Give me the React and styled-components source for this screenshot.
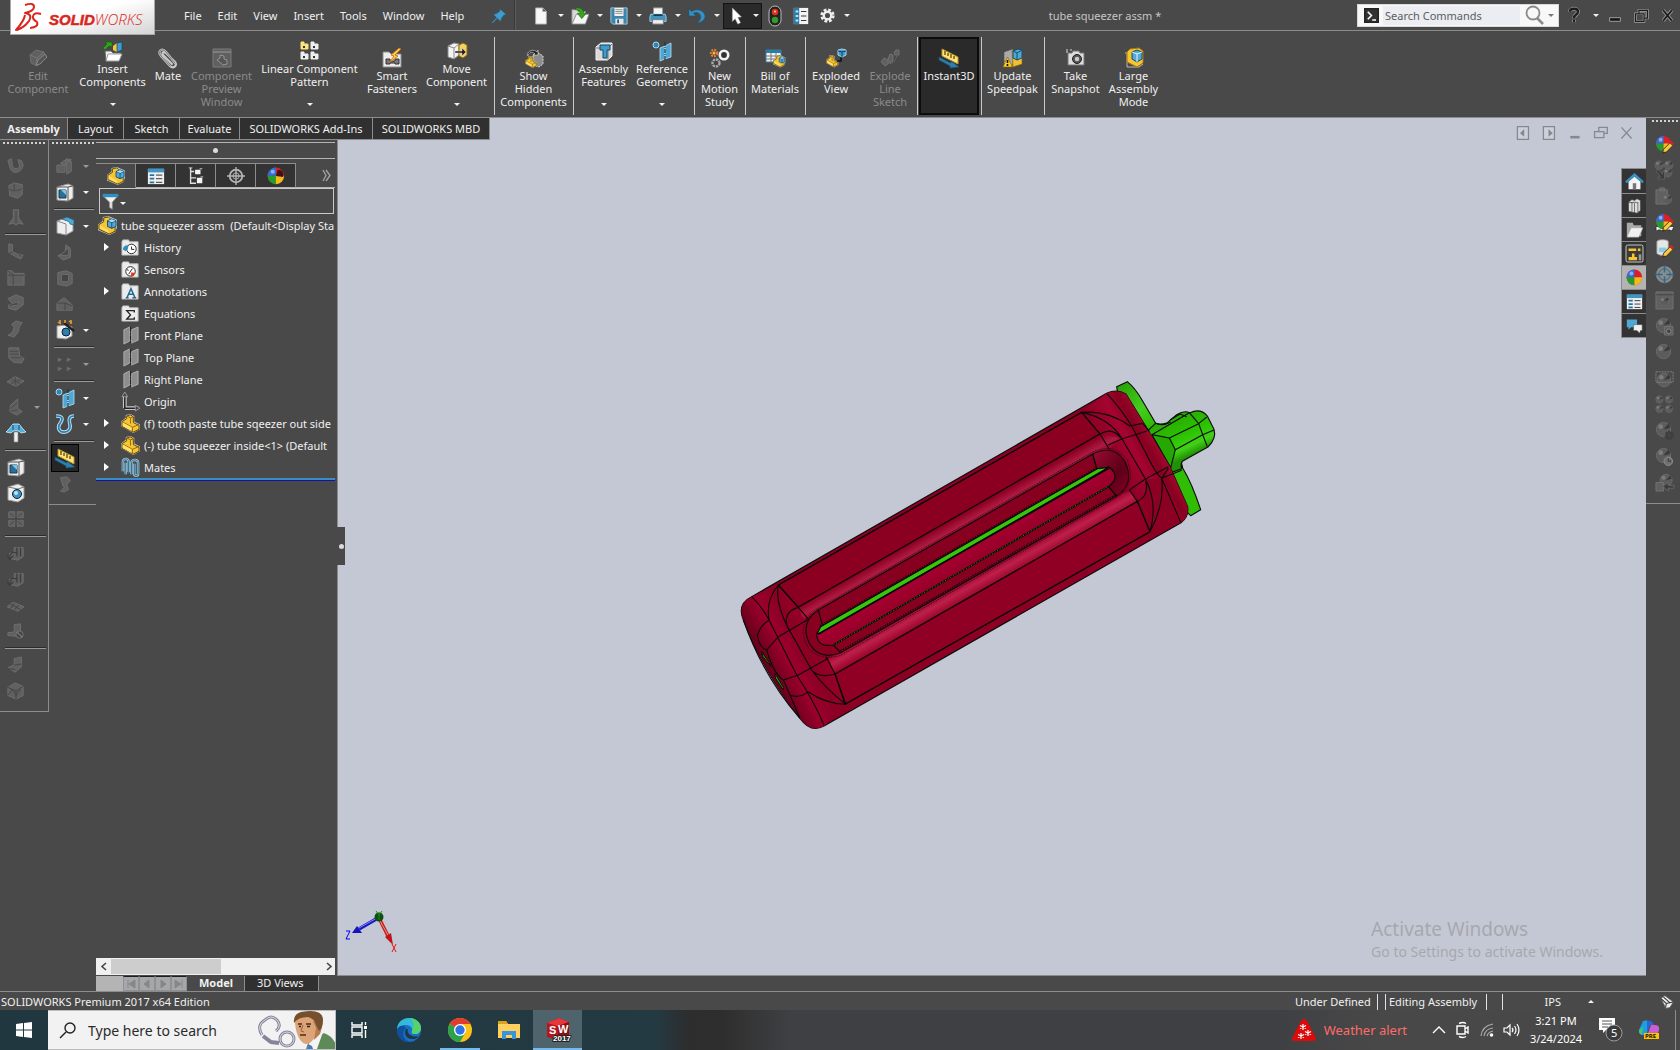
import React from 'react';
import styled, { createGlobalStyle, css } from 'styled-components';

const c = {
  base: '#494949',
  dark: '#303030',
  line: '#8c8c8c',
  light: '#d0d0d0',
  text: '#f0f0f0',
  dim: '#8b8b8b',
  canvas: '#c4c8d4',
};

const Global = createGlobalStyle`
  * { box-sizing: border-box; }
  html, body { margin: 0; background: ${c.base}; }
  body, button, input { font-family: "Noto Sans", "Open Sans", sans-serif; font-size: 11px; }
  button { margin: 0; padding: 0; border: 0; background: none; color: inherit; }
  ul { list-style: none; margin: 0; padding: 0; }
  svg { display: block; flex: none; overflow: visible; }
`;

/* ---------- icon drawings, all on a 20 x 20 grid ---------- */

const part = (
  <>
    <path d="M0 8l5-4V1l5-1 4 2v6l6 3v5l-7 4L0 13z" fill="#c9c9c9" />
    <path d="M1 8l5-3V2l4-1 3 2v6l6 3v4l-6 3L1 13z" fill="#f7c531" stroke="#5f4500" strokeWidth="1" />
    <path d="M1 8l11 6v5M12 14l7-3M6 2l4 2v6M10 4l3-1" fill="none" stroke="#8f6a05" strokeWidth="1" />
    <path d="M2 9l9 5v4l-9-5z" fill="#ffdf70" />
  </>
);
const assembly = (
  <>
    <path d="M0 9l5-4V1l6-1 9 4v8l-2 5-6 3L0 15z" fill="#c9c9c9" />
    <path d="M1 9l5-3V2l5-1 2 2v6l5 3v4l-6 3L1 14z" fill="#f7c531" stroke="#5f4500" />
    <path d="M2 10l9 5v3l-9-5z" fill="#ffdd66" />
    <path d="M10 5l4.500-2L19 5v6l-4.500 2L10 11z" fill="#55a9d6" stroke="#174d6d" />
    <path d="M10 5l4.500 2L19 5M14.500 7v6" fill="none" stroke="#174d6d" />
    <path d="M10.600 5l4-1.500 4 1.500-4 1.600z" fill="#a9dcf4" />
  </>
);
const folder = (
  <path d="M1 18V4l1-2h6l1 2h9v14z" fill="#ececec" stroke="#bdbdbd" />
);
const ballSegments = (
  <>
    <circle cx="9" cy="9" r="8" fill="#d8202a" />
    <path d="M9 9V1a8 8 0 0 0-8 8z" fill="#2d6fe0" />
    <path d="M9 9H1a8 8 0 0 0 8 8z" fill="#1f9e2c" />
    <path d="M9 9v8a8 8 0 0 0 8-8z" fill="#f2b91e" />
    <circle cx="6" cy="5" r="2" fill="#fff" opacity=".45" />
  </>
);
const pencil = (
  <path d="M8 19l1-4 7-7 3 3-7 7z M8 19l2-1M16 8l3 3" fill="#f6ca3e" stroke="#402c1c" strokeWidth="1" />
);
const darkBall = (
  <>
    <circle cx="9" cy="9" r="7.500" fill="#5c5c5c" stroke="#6c6c6c" />
    <path d="M9 9l5-6a7.500 7.500 0 0 1 2 4z" fill="#393939" />
    <circle cx="6" cy="6" r="2.500" fill="#7c7c7c" />
  </>
);
const refGeometry = (
  <>
    <circle cx="4" cy="4" r="3" fill="#2d87b5" stroke="#a9d7ee" />
    <path d="M8 7l5-2v13l-5 2zM13 5l6-3v14l-6 2z" fill="#4fa8d4" stroke="#b9e0f2" strokeWidth=".8" />
    <path d="M13 1v19" stroke="#16384b" strokeDasharray="4 1 1 1" strokeWidth="1.200" />
  </>
);
const instant = (
  <>
    <path d="M3 1l16 8v7L3 8z" fill="#ffe27a" stroke="#b99222" />
    <path d="M6 3v4M9 5v3M12 6v4M15 8v3" stroke="#4b3a00" strokeWidth="1.200" />
    <path d="M0 9l12 6v-2l8 6-9 1v-2L0 12z" fill="#2f7fae" stroke="#185071" strokeWidth=".7" />
  </>
);
const holeCube = (
  <>
    <path d="M2 5l11-3 5 2v12l-5 3-11-1z" fill="#ededed" stroke="#9a9a9a" />
    <path d="M13 5v14M2 5h11l5-1" fill="none" stroke="#555" />
    <path d="M4 8h7v8H4z" fill="#2c6f96" stroke="#153b52" />
    <path d="M6 8h5v5z" fill="#7cc5e6" />
  </>
);
const greyShape = (d) => (
  <path d={d} fill="#606060" stroke="#717171" strokeWidth="1" strokeLinejoin="round" />
);

const art = {
  editComp: <>{greyShape('M2 7l6-5 8 2 1 6-8 8-6-3z')}<path d="M2 7l7 3v8M9 10l7-6" fill="none" stroke="#777" /><path d="M8 17l2-5 7-6 2 3-7 7z" fill="#555" stroke="#888" /></>,
  insertComp: <><path d="M2 10h6l2 2h8l-3 8H3z" fill="#f0f0f0" stroke="#666" /><path d="M5 13h14l-3 7H3z" fill="#fff" stroke="#999" /><path d="M9 6V1H2l2 2-4 4 2 2 4-4z" fill="#2fa31c" stroke="#125c08" strokeWidth=".6" /><path d="M10 5l4-3v9l-4-2z" fill="#f7c531" /><path d="M14 2l5-1v8l-5 2z" fill="#3f9ccd" stroke="#134765" strokeWidth=".7" /></>,
  mate: <g fill="none" strokeLinecap="round"><path d="M17 15L8 4C4-1-1 3 3 8l9 10c3 3 8 0 5-4L8 5C5 3 3 5 6 8l8 8" stroke="#c9c9c9" strokeWidth="2.200" /><path d="M17 15L8 4C4-1-1 3 3 8l9 10" stroke="#454545" strokeWidth=".6" /></g>,
  preview: <><path d="M1 1h18v18H1z" fill="#5f5f5f" stroke="#7c7c7c" /><path d="M1 4h18" stroke="#888" strokeWidth="1.500" /><path d="M5 12l3-2V7l4 1v3l3 1v4l-4 1z" fill="#565656" stroke="#959595" /></>,
  linear: <>{[[1, 1, '#ffe27a'], [11, 1, '#eee'], [1, 11, '#eee'], [11, 11, '#eee']].map(([x, y, f]) => <path key={x + '-' + y} d={`M${x} ${y}h3v2h4v5h-7z`} fill={f} stroke={f} />)}<path d="M3 5h2v2H3zM13 5h2v2h-2zM3 15h2v2H3zM13 15h2v2h-2z" fill="#333" /></>,
  smart: <><path d="M1 4h6l2 2h10v13H1z" fill="#ededed" stroke="#8d8d8d" /><path d="M4 16v-5h4v2h5v-2h4v5h-4v-1H8v1z" fill="#777" stroke="#333" /><path d="M17 0L9 7l3 1-5 7 9-7-3-1 6-6z" fill="#ffce3b" stroke="#c7631b" strokeWidth=".8" /></>,
  move: <><path d="M1 5l6-3 5 1v11l-5 4-6-2z" fill="#f3f3f3" stroke="#8b8b8b" /><path d="M1 5l6 2 5-4M7 7v11" fill="none" stroke="#8b8b8b" /><path d="M12 4l4-2 4 2v10l-4 3-4-2z" fill="#f4d160" stroke="#8c6c10" /><path d="M8 10h7V7l4 4-4 4v-3H8z" fill="#222" stroke="#ddd" strokeWidth=".5" /></>,
  showHidden: <><path d="M9 7l4-3 6 4v8l-4 3-6-2z" fill="#8d8d8d" stroke="#d9d9d9" strokeDasharray="2 1" /><g transform="translate(1 8) scale(.6)">{part}</g><path d="M3 7c1-5 7-6 10-3l1-2v5H9l2-1C8 3 5 4 4 8z" fill="#222" stroke="#ddd" strokeWidth=".6" /></>,
  asmFeatures: <><path d="M2 6l5-4h11v13l-4 4H2z" fill="#d9d9d9" stroke="#f5f5f5" /><path d="M2 7h12v12M14 7l4-4" fill="none" stroke="#777" /><path d="M6 4h10v5h-3v8H9V9H6z" fill="#3f9ccd" stroke="#154a67" /></>,
  refGeometry,
  motion: <><circle cx="4" cy="5" r="3" fill="none" stroke="#e57f2e" strokeWidth="2.400" strokeDasharray="1.800 1" /><circle cx="4" cy="5" r="1.500" fill="#f7b04b" /><circle cx="14" cy="7" r="4.200" fill="#333" stroke="#f2f2f2" strokeWidth="2.600" /><circle cx="6" cy="15" r="3.500" fill="#444" stroke="#a8a8a8" strokeWidth="2.400" strokeDasharray="2.400 .8" /></>,
  bom: <><path d="M1 2h15v12H1z" fill="#f2f2f2" stroke="#3b82a8" /><path d="M1 2h15v3H1z" fill="#2d7ba6" /><path d="M1 8h15M1 11h15M6 5v9M11 5v9" stroke="#777" /><g transform="translate(8 7) scale(.62)">{assembly}</g></>,
  explode: <><g transform="translate(0 7) scale(.62)">{part}</g><path d="M11 13h4V9" fill="none" stroke="#111" strokeWidth="1.500" /><path d="M12 2l4-1 4 1v5l-4 2-4-2z" fill="#3f9ccd" stroke="#a7d8ef" /><path d="M12 3l4 1 4-1M16 4v5" stroke="#0f4059" fill="none" /></>,
  explodeLine: <>{greyShape('M1 14l3-4 4 2v4l-3 2z')}{greyShape('M8 11l2-5 3 1v6l-3 2z')}{greyShape('M14 4l2-2h3v5h-4z')}<path d="M8 15c5 2 8-3 9-8" fill="none" stroke="#777" strokeDasharray="1 1" /></>,
  instant,
  speedpak: <><path d="M1 4l9-3v17l-9-1z" fill="#aaa" stroke="#555" strokeDasharray="2 1" /><path d="M9 3l10-1v14l-9 3z" fill="#f0bf32" stroke="#8b6400" strokeWidth=".6" /><path d="M10 3l5-2 4 1v8l-5 2-4-2z" fill="#4fa8d4" stroke="#174d6d" /><path d="M10 3l4 2 5-3M14 5v7" fill="none" stroke="#174d6d" /><path d="M4.500 9l5 10H0z" fill="#ffcf1f" stroke="#8b6400" strokeWidth=".7" /><path d="M4.500 12v3M4.500 16v2" stroke="#111" strokeWidth="1.600" /></>,
  camera: <><path d="M2 5h4l1-2h6l1 2h4v12H2z" fill="#ddd" stroke="#777" /><circle cx="11" cy="11" r="4.500" fill="#555" stroke="#222" /><circle cx="11" cy="11" r="2.200" fill="#ccc" /><path d="M1 1v4M4 2h2" stroke="#ddd" /></>,
  large: <><path d="M1 5h2v14h12l4-3" fill="none" stroke="#bbb" /><path d="M3 4l3-3 9-1 4 3v12l-6 4-10-5z" fill="#f7c531" stroke="#a57a08" /><path d="M8 4l5-2 5 2v7l-5 3-5-3z" fill="#55a9d6" stroke="#174d6d" /><path d="M8 4l5 2 5-2M13 6v8" fill="none" stroke="#dff3fb" /></>,

  newDoc: <path d="M4 1h8l4 4v14H4zM12 1v4h4" fill="#f7f7f7" stroke="#aaa" />,
  open: <><path d="M1 3h6l1 2h8v13H1z" fill="#d9d9d9" stroke="#888" /><path d="M6 8h14l-4 11H1z" fill="#f6f6f6" stroke="#888" /><path d="M5 1c6-1 9 2 9 6h3l-5 6-5-6h3c0-2-1-4-5-4z" fill="#37a51c" stroke="#145c08" strokeWidth=".6" /></>,
  save: <><path d="M1 1h18v18H3l-2-2z" fill="#3c86ad" stroke="#a8cfe3" /><path d="M5 1h10v9H5z" fill="#f2f2f2" /><path d="M6 3h8M6 5h8M6 7h8" stroke="#888" /><path d="M6 13h9v6H6z" fill="#e4e4e4" /><path d="M8 14h2v4H8z" fill="#245d7c" /></>,
  print: <><path d="M5 1h10v8H5z" fill="#f5f5f5" stroke="#999" /><path d="M2 8h16l1 3v5H1v-5z" fill="#3f93be" stroke="#a8cfe3" /><path d="M4 14h12v5H4z" fill="#eee" stroke="#777" /><path d="M5 9h10" stroke="#133b50" strokeWidth="2" /></>,
  undo: <path d="M1 2v8h8L6 7c4-2 8 0 8 4 0 3-2 5-4 7 6-1 9-4 9-8C18 3 9 1 4 5z" fill="#3a8fc0" stroke="#17516f" strokeWidth=".7" />,
  cursor: <path d="M6 1l10 10-4 .5 3 6-3 1.500-3-6-3 3z" fill="#fff" stroke="#aaa" strokeWidth=".6" />,
  traffic: <><rect x="4" y="0" width="12" height="20" rx="6" fill="#222" stroke="#bbb" /><circle cx="10" cy="6" r="3.200" fill="#e3301c" /><circle cx="10" cy="14" r="3.200" fill="#329b2b" /><circle cx="10" cy="5.500" r="1" fill="#ffc9bd" /></>,
  list: <><path d="M2 1h16v18H2z" fill="#f3f3f3" /><path d="M2 1h6v18H2z" fill="#2f7ba3" /><path d="M4 4h3v2H4zM4 9h3v2H4zM4 14h3v2H4z" fill="#b9e2f5" /><path d="M10 5h6M10 10h6M10 15h6" stroke="#222" /></>,
  gear: <><circle cx="10" cy="10" r="7.500" fill="none" stroke="#ececec" strokeWidth="4" strokeDasharray="3.600 2.290" /><circle cx="10" cy="10" r="5" fill="none" stroke="#ececec" strokeWidth="3.200" /></>,
  pin: <path d="M11 1l8 7-3 1-3 4-1 4-4-4-6 6-1-1 6-6-4-4 4-1 4-3z" fill="#3f9ccd" stroke="#1d5776" strokeWidth=".6" />,
  prompt: <><path d="M1 1h18v18H1z" fill="#333" stroke="#222" strokeWidth="2" /><path d="M5 5l5 5-5 5M11 16h5" fill="none" stroke="#fff" strokeWidth="2" /></>,
  magnifier: <><circle cx="9" cy="8" r="6.500" fill="none" stroke="#8b8b8b" strokeWidth="1.800" /><path d="M13 13l6 6" stroke="#8b8b8b" strokeWidth="2.600" /></>,
  help: <g fill="none"><path d="M5 6c0-5 10-5 10 0 0 4-5 3-5 8M10 16v3" stroke="#9c9c9c" strokeWidth="5" /><path d="M5 6c0-5 10-5 10 0 0 4-5 3-5 8M10 16v3" stroke="#1d1d1d" strokeWidth="3" /></g>,
  winMin: <path d="M4 13h12v4H4z" fill="#151515" stroke="#aaa" />,
  winRestore: <g fill="none"><path d="M7 8V4h10v9h-4M3 8h10v9H3z" stroke="#a5a5a5" strokeWidth="3" /><path d="M7 8V4h10v9h-4M3 8h10v9H3z" stroke="#1b1b1b" strokeWidth="1.400" /></g>,
  winClose: <g fill="none"><path d="M5 4l10 12M15 4L5 16" stroke="#a0a0a0" strokeWidth="4" /><path d="M5 4l10 12M15 4L5 16" stroke="#1b1b1b" strokeWidth="2" /></g>,

  docPrev: <><path d="M4 3h13v15H4z" fill="#ccd0da" stroke="#85888f" strokeWidth="1.500" /><path d="M13 3v15M12 6l-5 5 5 4z" fill="#85888f" /></>,
  docNext: <><path d="M4 3h13v15H4z" fill="#ccd0da" stroke="#85888f" strokeWidth="1.500" /><path d="M10 6l5 5-5 4z" fill="#85888f" /></>,
  docMin: <path d="M5 14h11v3H5z" fill="#85888f" />,
  docRestore: <path d="M8 9V4h10v7h-4M3 9h11v7H3z" fill="none" stroke="#85888f" strokeWidth="1.500" />,
  docClose: <path d="M4 4l12 13M16 4L4 17" stroke="#85888f" strokeWidth="1.500" />,

  assembly,
  part,
  propList: <><path d="M1 2h18v17H1z" fill="#f0f0f0" /><path d="M1 2h18v4H1z" fill="#3b97c7" /><path d="M3 8h5v2H3zM3 12h5v2H3zM3 16h5v2H3z" fill="#2673a0" /><path d="M10 9h7M10 13h7M10 17h7" stroke="#222" /></>,
  config: <><path d="M4 1v17h6M4 5h4M4 12h6" fill="none" stroke="#ddd" strokeWidth="1.500" /><path d="M9 3h6v5H9zM11 12h6v6h-6z" fill="#f4f4f4" /><path d="M2 1h4M14 2h3M15 11h3" stroke="#ddd" /></>,
  target: <g fill="none" stroke="#b5b5b5"><circle cx="10" cy="10" r="7" strokeWidth="2" /><circle cx="10" cy="10" r="3.500" /><path d="M10 0v20M0 10h20" strokeWidth="1.500" /></g>,
  ball: <g transform="translate(-.5 -.5) scale(1.150)">{ballSegments}</g>,
  ballDark: <><g transform="translate(-.5 -.5) scale(1.150)">{ballSegments}</g><path d="M10 10l2-7c5 0 7 4 6 8z" fill="#3b1515" /></>,
  funnel: <><path d="M1 3h18l-7 8v8l-3-2v-6z" fill="#eee" stroke="#999" /><path d="M1 1h18v4H1z" fill="#2f8fc0" /></>,
  history: <>{folder}<circle cx="11" cy="11.500" r="5" fill="#fff" stroke="#222" /><path d="M11 9v3h3" fill="none" stroke="#222" /><path d="M2 12c0-3 3-5 6-4l-1 4-1-1-1 3z" fill="#2f8fc0" /></>,
  sensors: <>{folder}<circle cx="10" cy="12" r="5" fill="#fff" stroke="#222" /><path d="M8 15l4-6M6 10l2 1" stroke="#222" /><path d="M11 13l4 1-2 3h-3z" fill="#e2371c" /></>,
  equations: <>{folder}<path d="M14 9V7H6l4 4.500L6 16h8v-2" fill="none" stroke="#222" strokeWidth="1.400" /></>,
  annotations: <>{folder}<path d="M5 16.500h3M12 16.500h4M6.500 16L10.500 7l4 9M8 13h5" fill="none" stroke="#226b95" strokeWidth="1.600" /></>,
  plane: <><path d="M3 4l6-3v15l-6 3zM11 4l7-3v14l-7 3z" fill="#8d8d8d" stroke="#bdbdbd" strokeWidth=".8" /><path d="M10 1v18" stroke="#222" strokeDasharray="5 1 2 1" strokeWidth="1.300" /></>,
  origin: <><path d="M4 17V3M4 17h14" stroke="#c7c7c7" strokeWidth="4" /><path d="M4 18V3M3 17h15" stroke="#222" strokeWidth="1.600" /><path d="M4 0l-3 5h6zM20 17l-5-3v6z" fill="#444" stroke="#bbb" strokeWidth=".7" /></>,
  mates: <g fill="none"><path d="M2 14V4c0-4 6-4 6 0v11M5 5v12M11 17V5c0-4 7-4 7 0v12c0 2-4 2-4 0V6" stroke="#9fc7dc" strokeWidth="2.600" /><path d="M2 14V4c0-4 6-4 6 0v11M5 5v12M11 17V5c0-4 7-4 7 0v12c0 2-4 2-4 0V6" stroke="#256a90" /></g>,

  holeCube,
  cutRound: <><path d="M2 5l9-3 7 3v10l-7 4-9-2z" fill="#eee" stroke="#999" /><path d="M2 5l9 3v11" fill="none" stroke="#888" /><path d="M7 3l5-2 7 3v5l-4-1c0-3-4-3-8-5z" fill="#4fa8d4" stroke="#225a79" strokeWidth=".7" /></>,
  wizardHole: <><path d="M2 6l9-1 6 2v9l-6 3-9-1z" fill="#eee" stroke="#999" /><circle cx="11" cy="12" r="4" fill="#2f7fae" stroke="#123" /><path d="M9 3l10 8" stroke="#222" strokeWidth="2.500" /><path d="M3 2l3 2M5 0v4M14 1l3 2M16 0v4M10 0v3" stroke="#f0a030" strokeWidth="1.500" /></>,
  spline: <><path d="M1 2c10 0 5 6 3 9-3 10 13 9 11 0-1-4-2-9 4-9" fill="none" stroke="#b7dcf0" strokeWidth="3.600" /><path d="M1 2c10 0 5 6 3 9-3 10 13 9 11 0-1-4-2-9 4-9" fill="none" stroke="#2a7dab" strokeWidth="1.600" /></>,
  dome: <><path d="M0 9l3-3 4-5h6l4 5 3 3-5 1c-2-3-8-3-10 0z" fill="#56b0dc" stroke="#cfeaf7" strokeWidth=".8" /><path d="M7 2v5M13 2v5" stroke="#174d6d" /><path d="M8 9h4v10H8z" fill="#f0f0f0" stroke="#888" strokeWidth=".7" /></>,
  roundHole: <><path d="M2 4l10-3 6 3v11l-6 4-10-2z" fill="#eee" stroke="#999" /><path d="M2 4l10 2 6-2" fill="none" stroke="#777" /><circle cx="11" cy="11" r="4.500" fill="#3c94c2" stroke="#123" /><circle cx="10" cy="10" r="2" fill="#bfe5f5" /></>,
  gU: greyShape('M1 5l4-2 1 8c1 4 7 4 8 0l-2-7 4 1 2 5c-1 8-10 11-14 5z'),
  gCube: <>{greyShape('M2 4l6-3 9 2v11l-5 4-9-3z')}<path d="M2 8c6 3 10 2 15-1M8 2v8" stroke="#484848" fill="none" /></>,
  gLoft: <>{greyShape('M7 2h6v9l5 7-5-1-3 2-3-2-5 1 5-7z')}<path d="M10 3v14" stroke="#454545" /></>,
  gBend: <>{greyShape('M2 2l4 1v8l12 4-3 4L2 12z')}<path d="M6 11l-4 2M7 8l9 8" stroke="#454545" /></>,
  gBox: <>{greyShape('M1 3h4l3 3h11v13H1z')}<path d="M1 8h18M7 8v11M1 3l6 5" stroke="#484848" fill="none" /></>,
  gSweep: <>{greyShape('M1 5l9-4 8 3v8l-8 6-8-2v-4l9 1 3-4-8 2z')}<path d="M3 13l8-3" stroke="#464646" /></>,
  gS: greyShape('M5 5l5-4 7 2-3 4-2 7-4 5-7-2 5-3 2-6z'),
  gStack: <>{greyShape('M2 2h11l1 9 5 3-3 5-9-1-5-5z')}<path d="M3 6h10M3 9h10M5 13h11" stroke="#484848" /></>,
  gMesh: <>{greyShape('M0 11l9-6 10 5-9 6z')}<path d="M5 8l10 5M4 13l12-5M9 5l1 11" stroke="#484848" /></>,
  gFan: <>{greyShape('M4 8l8-7v11l5 3-6 4-8-4z')}<path d="M3 12l9-7M3 15l9-2" stroke="#484848" /></>,
  gGrid: <>{greyShape('M2 2h7v7H2zM11 2h7v7h-7zM2 11h7v7H2zM11 11h7v7h-7z')}<path d="M3 3l5 5M12 8l5-5M3 17l5-5M12 12l5 5" stroke="#484848" /><path d="M10 1v18M1 10h18" stroke="#484848" strokeWidth="1.500" /></>,
  gArrowBox: <>{greyShape('M8 4h10v10l-6 4-9-2v-6h5z')}<path d="M11 10c-6-2-8 1-8 6M0 13l3 4 4-4M11 4v10M15 4v10" stroke="#3d3d3d" fill="none" strokeWidth="1.400" /></>,
  gTiles: <>{greyShape('M0 12l7-5 12 5-7 5z')}<path d="M4 9l11 6M8 8l-4 6M13 10l-5 6" stroke="#444" /></>,
  gNo: <>{greyShape('M1 12l7-1V3l7-1v9l-3 5-11-1z')}<circle cx="14" cy="14" r="4" fill="#444" stroke="#777" /><path d="M11 11l6 6" stroke="#777" strokeWidth="1.500" /></>,
  gStep: <>{greyShape('M1 13l7-3V3l8-2v11l-7 6z')}<path d="M8 10l8-1M1 14l8 1" stroke="#444" /></>,
  gWire: <>{greyShape('M1 6l8-5 9 4v10l-8 4-9-4z')}<path d="M1 6l9 4 8-5M10 10v9M6 8l4 7 5-7M1 15l5-7" stroke="#444" fill="none" /></>,
  gExtrude: <>{greyShape('M1 9h9v8H1zM11 3l6 2v11l-5 3zM5 7l7-5 5 1-7 6z')}</>,
  gRib: <>{greyShape('M2 14l8-3 1-9 5 4v10l-8 3z')}<path d="M5 14l9-9v9z" fill="#4b4b4b" stroke="#6f6f6f" /></>,
  gShell: <>{greyShape('M2 4l9-2 7 3v11l-6 3-10-2z')}<path d="M6 6h8v8H6z" fill="#454545" stroke="#6f6f6f" /></>,
  gDraft: <>{greyShape('M1 9l8-6 9 8v6H1z')}<path d="M1 9h9l8 3M10 9v8" stroke="#444" fill="none" /></>,
  gDots: <path d="M2 3l5 2-5 3zM12 3l5 2-5 3zM2 13l5 2-5 3zM12 13l5 2-5 3z" fill="#6c6c6c" />,
  gTwist: greyShape('M5 3l7-1 4 4-4 5 2 5-5 3-4-1 4-4-2-4z'),
  gDown: <><g transform="translate(-1 -1) scale(.6)">{darkBall}</g><g transform="translate(9 -1) scale(.6)">{darkBall}</g><g transform="translate(8 7) scale(.6)">{darkBall}</g><path d="M1 10l2-1 5 5v-3h2v8H3v-2h3z" fill="#3a3a3a" stroke="#6c6c6c" strokeWidth=".7" /></>,
  gPaste: <>{greyShape('M1 3h12v15H1zM5 1h5v3H5z')}<g transform="translate(7 7) scale(.65)">{darkBall}</g></>,
  gRender: <>{greyShape('M1 1h18v18H1z')}<path d="M1 4h18" stroke="#444" /><g transform="translate(4 5) scale(.65)">{darkBall}</g></>,
  gPreview: <>{darkBall}{greyShape('M10 10h9v9h-9z')}<circle cx="14.500" cy="15" r="2.500" fill="#444" stroke="#888" /></>,
  gBall: darkBall,
  gRegion: <><g transform="translate(1 3) scale(.95)">{darkBall}</g><path d="M1 3h18v11H1z" fill="none" stroke="#858585" strokeDasharray="2 1" /></>,
  gFour: <>{[[0, 0], [10, 0], [0, 10], [10, 10]].map(([x, y]) => <g key={x + '.' + y} transform={`translate(${x} ${y}) scale(.52)`}>{darkBall}</g>)}</>,
  gOptions: <>{darkBall}<circle cx="15" cy="15" r="3.500" fill="#444" stroke="#3c3c3c" strokeWidth="2.500" strokeDasharray="2 1" /></>,
  gClock: <>{darkBall}<circle cx="14" cy="15" r="4.500" fill="#707070" stroke="#8d8d8d" /><path d="M14 12v3h3" fill="none" stroke="#333" /></>,
  gRecall: <><g transform="translate(4 0) scale(.85)">{darkBall}</g>{greyShape('M1 10h8v9H1z')}<path d="M8 14l6-4v3h6v3h-6v3z" fill="#3d3d3d" stroke="#777" strokeWidth=".7" /></>,
  ballPencil: <>{ballSegments}{pencil}<path d="M15 8l2-2 3 3-2 2z" fill="#d8202a" /></>,
  scene: <><path d="M1 14h18v4H1z" fill="#eee" stroke="#222" strokeDasharray="3 2" />{ballSegments}{pencil}<path d="M15 8l2-2 3 3-2 2z" fill="#d8202a" /></>,
  decal: <><path d="M2 3c0-3 12-3 12 0v12c-2 3-10 3-12 0z" fill="#e7e7e7" stroke="#999" /><path d="M4 9h8v5H4z" fill="#8fc9e6" />{pencil}<path d="M15 8l2-2 3 3-2 2z" fill="#d8202a" /></>,
  targetBlue: <><circle cx="10" cy="10" r="9" fill="#878c90" /><g fill="none" stroke="#316885"><circle cx="10" cy="10" r="6" /><path d="M10 0v8M10 12v8M0 10h8M12 10h8" strokeWidth="1.500" /></g></>,

  home: <><path d="M3 10v9h14v-9l-7-6z" fill="#f4f4f4" /><path d="M0 11L10 2l10 9" fill="none" stroke="#3a93c1" strokeWidth="3" /><path d="M8 12h4v7H8z" fill="#777" /></>,
  books: <path d="M3 6l4-3 3 1 3-2 4 2v12l-4 3-10-2zM7 7v11M10 7v12M14 6v12M3 6l4 1 3-1 4 1" fill="#ddd" stroke="#444" strokeWidth=".8" />,
  openFolder: <><path d="M1 2h7l1 3h9v13H1z" fill="#a9a9a9" /><path d="M6 8h14l-5 11H1z" fill="#f1f1f1" stroke="#999" strokeWidth=".6" /></>,
  palette: <><rect x="0" y="0" width="20" height="20" rx="2" fill="#3a3a3a" stroke="#ddd" /><path d="M3 4h9v3H3zM14 4h3v3h-3zM7 10h3v4h3v4H3v-4h4z" fill="#f7c531" /><path d="M15 11h3v7h-3z" fill="#999" /></>,
  chat: <><path d="M1 3h12v9H6l-3 3v-3H1z" fill="#4fa8d4" /><path d="M9 9h10v7h-2l-1 3-3-3H9z" fill="#f1f1f1" stroke="#555" strokeWidth=".6" /></>,
  tools: <><path d="M1 5l6-4 12 9-5 8-6 1-2-5z" fill="#ededed" stroke="#666" /><path d="M1 5l8 7 10-2M9 12l-1 6M5 3l9 8" fill="none" stroke="#333" strokeWidth="1.500" /></>,
};

function Icon({ name, size = 18 }) {
  return (
    <svg width={size} height={size} viewBox="0 0 20 20" aria-hidden="true">
      {art[name]}
    </svg>
  );
}

/* ---------- shared pieces ---------- */

const Caret = styled.span`
  width: 0;
  height: 0;
  flex: none;
  border: 3px solid transparent;
  border-bottom-width: 0;
  border-top-color: ${(p) => p.$color || '#f2f2f2'};
`;

const Page = styled.div`
  min-height: 100vh;
  display: flex;
  flex-direction: column;
  background: ${c.base};
  color: ${c.text};
  line-height: 16px;
`;

/* ---------- title bar ---------- */

const TitleBar = styled.header`
  display: flex;
  align-items: center;
  height: 31px;
  border-bottom: 1px solid ${c.line};
`;

const Logo = styled.div`
  align-self: flex-start;
  display: flex;
  align-items: center;
  gap: 5px;
  flex: none;
  width: 145px;
  height: 35px;
  margin-left: 10px;
  padding-left: 4px;
  border: 1px solid #a9a9a9;
  border-top: 0;
  background: linear-gradient(165deg, #fff 45%, #d4d4d4);
  color: #d9261c;
  font: italic 300 15px/20px "Open Sans", sans-serif;
  z-index: 2;
`;
const LogoText = styled.span`
  padding-top: 4px;
  b { font: italic 700 15px/20px "Liberation Sans", sans-serif; -webkit-text-stroke: 0.5px #d9261c; }
`;

const MenuBar = styled.nav`
  display: flex;
  align-items: center;
  flex: none;
  width: 360px;
  height: 30px;
  padding: 1px 7px 0 21px;
  border-right: 1px solid #3a3a3a;
  box-shadow: 1px 0 #5c5c5c;
`;
const MenuItem = styled.button`
  padding: 0 8px;
  font-size: 11px;
`;
const PinButton = styled.button`
  margin-left: auto;
`;

const QuickBar = styled.div`
  display: flex;
  flex: none;
  margin-left: 13px;
  padding-top: 1px;
`;
const ToolPair = styled.div`
  display: flex;
  height: 26px;
  ${(p) => p.$on && css`background: #2a2a2a; outline: 1px solid #141414; outline-offset: -1px;`}
`;
const ToolButton = styled.button`
  display: flex;
  align-items: center;
  justify-content: center;
  flex: none;
  width: ${(p) => p.$w || 26}px;
  height: 26px;
`;

const DocTitle = styled.div`
  flex: 1;
  padding-top: 1px;
  text-align: center;
  color: #c6c6c6;
`;

const CommandSearch = styled.label`
  display: flex;
  align-items: center;
  flex: none;
  width: 202px;
  height: 23px;
  padding: 1px 4px 1px 6px;
  background: #f8f8f8;
  border: 1px solid #d9d9d9;
  gap: 4px;
`;
const CommandInput = styled.input`
  flex: 1;
  min-width: 0;
  height: 19px;
  border: 0;
  padding: 0 2px;
  background: #ebedf2;
  color: #555;
  &::placeholder { color: #5c5c5c; opacity: 1; }
`;
const WindowButtons = styled.div`
  display: flex;
  flex: none;
`;

/* ---------- ribbon ---------- */

const Ribbon = styled.div`
  display: flex;
  height: 87px;
  padding: 6px 0 2px;
  border-bottom: 1px solid ${c.line};
`;
const RibbonItem = styled.button`
  display: flex;
  flex-direction: column;
  align-items: center;
  justify-content: flex-start;
  flex: none;
  width: ${(p) => p.$w}px;
  padding-top: ${(p) => (p.$drop ? 4 : 11)}px;
  line-height: 13px;
  color: ${(p) => (p.$off ? c.dim : c.text)};
  ${(p) => p.$on && css`background: #2a2a2a; outline: 2px solid #0c0c0c; outline-offset: -2px;`}
`;
const RibbonText = styled.span`
  margin-top: 1px;
  white-space: pre;
`;
const RibbonCaret = styled(Caret)`
  margin-top: 15px;
`;
const RibbonRule = styled.div`
  flex: none;
  width: 1px;
  margin: 0 1px 0 2px;
  background: #c9c9c9;
`;

const ribbon = [
  ['editComp', 'Edit\nComponent', 76, { off: true }],
  ['insertComp', 'Insert\nComponents', 73, { drop: true }],
  ['mate', 'Mate', 38, {}],
  ['preview', 'Component\nPreview\nWindow', 69, { off: true }],
  ['linear', 'Linear Component\nPattern', 107, { drop: true }],
  ['smart', 'Smart\nFasteners', 58, {}],
  ['move', 'Move\nComponent', 71, { drop: true }],
  null,
  ['showHidden', 'Show\nHidden\nComponents', 75, {}],
  null,
  ['asmFeatures', 'Assembly\nFeatures', 57, { drop: true }],
  ['refGeometry', 'Reference\nGeometry', 60, { drop: true }],
  null,
  ['motion', 'New\nMotion\nStudy', 47, {}],
  null,
  ['bom', 'Bill of\nMaterials', 56, {}],
  null,
  ['explode', 'Exploded\nView', 58, {}],
  ['explodeLine', 'Explode\nLine\nSketch', 50, { off: true }],
  null,
  ['instant', 'Instant3D', 60, { on: true }],
  null,
  ['speedpak', 'Update\nSpeedpak', 59, {}],
  null,
  ['camera', 'Take\nSnapshot', 59, {}],
  ['large', 'Large\nAssembly\nMode', 57, {}],
];

/* ---------- workspace ---------- */

const Workspace = styled.div`
  display: flex;
  flex: 1;
`;
const MainArea = styled.div`
  position: relative;
  display: flex;
  flex-direction: column;
  flex: 1;
  min-width: 0;
  background: ${c.canvas};
`;
const CommandTabs = styled.div`
  display: flex;
  height: 22px;
  flex: none;
`;
const CommandTab = styled.button`
  flex: none;
  width: ${(p) => p.$w}px;
  border: 1px solid ${c.line};
  border-width: 0 1px 1px 0;
  background: ${(p) => (p.$on ? c.base : c.dark)};
  font-weight: ${(p) => (p.$on ? 700 : 400)};
`;
const commandTabs = [
  ['Assembly', 68], ['Layout', 56], ['Sketch', 56], ['Evaluate', 60],
  ['SOLIDWORKS Add-Ins', 133], ['SOLIDWORKS MBD', 117],
];

const Lower = styled.div`
  display: flex;
  flex: 1;
`;
const SideArea = styled.div`
  display: flex;
  flex: none;
  align-items: flex-start;
  background: ${c.base};
`;
const Strip = styled.div`
  display: flex;
  flex-direction: column;
  flex: none;
  width: ${(p) => p.$w}px;
  padding-bottom: ${(p) => p.$end}px;
  border-bottom: 1px solid ${c.line};
  ${(p) => p.$rule && css`border-right: 1px solid ${c.line};`}
`;
const Grip = styled.div`
  height: 2px;
  margin: ${(p) => p.$m};
  background: repeating-linear-gradient(90deg, #d2d2d2 0 2px, transparent 2px 4px);
`;
const StripRow = styled.div`
  display: flex;
  align-items: center;
  height: 26px;
  padding-left: ${(p) => p.$pad || 3}px;
`;
const StripButton = styled(ToolButton)`
  ${(p) => p.$on && css`background: #262626; outline: 1px solid #000;`}
`;
const StripCaret = styled(Caret)`
  margin-left: 5px;
`;
const StripRule = styled.div`
  height: 2px;
  margin: 3px 2px 3px 5px;
  background: linear-gradient(#2c2c2c 50%, #9a9a9a 50%);
`;

const stripA = ['gU', 'gCube', 'gLoft', '-', 'gBend', 'gBox', 'gSweep', 'gS', 'gStack', 'gMesh', 'gFan>', 'dome', '-', 'holeCube', 'roundHole', 'gGrid', '-', 'gArrowBox', 'gArrowBox', 'gTiles', 'gNo', '-', 'gStep', 'gWire'];
const stripB = ['gExtrude>', 'holeCube>', '-', 'cutRound>', 'gRib', 'gShell', 'gDraft', 'wizardHole>', '-', 'gDots>', '-', 'refGeometry>', 'spline>', '-', 'instant!', 'gTwist'];
const stripR = ['ballPencil', 'gDown', 'gPaste', 'scene', 'decal', 'targetBlue', 'gRender', 'gPreview', 'gBall', 'gRegion', 'gFour', 'gOptions', 'gClock', 'gRecall'];

function StripItems({ items }) {
  return items.map((it, i) => {
    if (it === '-') return <StripRule key={i} />;
    const name = it.replace(/[>!]/, '');
    const off = name[0] === 'g';
    return (
      <StripRow key={i}>
        <StripButton aria-label={name} $on={it.endsWith('!')}>
          <Icon name={name} size={off ? 18 : 20} />
        </StripButton>
        {it.endsWith('>') && <StripCaret $color={off ? '#9a9a9a' : undefined} />}
      </StripRow>
    );
  });
}

/* ---------- feature manager ---------- */

const Panel = styled.section`
  display: flex;
  flex-direction: column;
  align-self: stretch;
  flex: none;
  width: 239px;
  margin-right: 2px;
`;
const PanelGrip = styled.div`
  display: flex;
  align-items: center;
  justify-content: center;
  height: 17px;
  margin: 2px 0 5px;
  border: 1px solid #b5b5b5;
  border-width: 1px 0;
`;
const Dot = styled.span`
  width: 5px;
  height: 5px;
  border-radius: 50%;
  background: #dcdcdc;
`;
const PanelTabs = styled.div`
  display: flex;
  align-items: center;
  height: 24px;
  border-bottom: 1px solid #b5b5b5;
  flex: none;
`;
const PanelTab = styled.button`
  display: flex;
  align-items: center;
  justify-content: center;
  width: 40px;
  height: 25px;
  border: 1px solid ${c.line};
  border-left: 0;
  background: ${(p) => (p.$on ? c.base : '#333')};
  border-bottom-color: ${(p) => (p.$on ? c.base : '#b5b5b5')};
`;
const PanelMore = styled.button`
  margin-left: auto;
  padding-right: 4px;
`;
const Filter = styled.label`
  display: flex;
  align-items: center;
  height: 26px;
  margin: 0 1px 0 3px;
  padding-left: 2px;
  border: 1px solid #c9c9c9;
  flex: none;
`;
const FilterCaret = styled(Caret)`
  margin: 5px 0 0 1px;
`;
const FilterInput = styled.input`
  flex: 1;
  min-width: 0;
  border: 0;
  outline: 0;
  background: none;
  color: ${c.text};
`;
const TreeRow = styled.li`
  display: flex;
  align-items: center;
  height: 22px;
  padding-left: ${(p) => (p.$root ? 2 : 8)}px;
`;
const Twisty = styled.span`
  width: 17px;
  flex: none;
  &::before {
    content: "";
    display: ${(p) => (p.$show ? 'block' : 'none')};
    width: 0;
    border: 4px solid transparent;
    border-left: 5px solid #fff;
    border-right: 0;
  }
`;
const TreeLabel = styled.button`
  display: flex;
  align-items: center;
  gap: 4px;
  flex: none;
  white-space: pre;
`;
const Rollback = styled.div`
  height: 3px;
  background: linear-gradient(#3a8cc4 66%, #1414a4 66%);
`;
const HScroll = styled.div`
  display: flex;
  align-items: center;
  justify-content: space-between;
  height: 17px;
  margin-top: auto;
  background: #f0f0f0;
  flex: none;
`;
const ScrollButton = styled.button`
  display: flex;
  align-items: center;
  justify-content: center;
  width: ${(p) => p.$w}px;
  height: 17px;
`;
const ScrollTrack = styled.div`
  flex: 1;
  height: 15px;
  &::before {
    content: "";
    display: block;
    width: 52%;
    height: 100%;
    background: #cdcdcd;
  }
`;
const SheetTabs = styled.div`
  display: flex;
  height: 16px;
  flex: none;
  padding-top: 1px;
`;
const SheetPad = styled.div`
  width: 27px;
  background: #b4b4b4;
`;
const SheetNav = styled.button`
  display: flex;
  align-items: center;
  justify-content: center;
  width: 16px;
  background: #a5a7a9;
  border: 1px solid #8f9193;
  border-top: 1px solid #1d1d1d;
`;
const SheetTab = styled.button`
  width: ${(p) => p.$w}px;
  line-height: 14px;
  padding: 0 0 2px 12px;
  text-align: left;
  font-weight: ${(p) => (p.$on ? 700 : 400)};
  background: ${(p) => (p.$on ? c.base : c.dark)};
  border-right: 1px solid ${c.line};
`;

const tree = [
  ['history', 'History', true],
  ['sensors', 'Sensors', false],
  ['annotations', 'Annotations', true],
  ['equations', 'Equations', false],
  ['plane', 'Front Plane', false],
  ['plane', 'Top Plane', false],
  ['plane', 'Right Plane', false],
  ['origin', 'Origin', false],
  ['part', '(f) tooth paste tube sqeezer out side', true],
  ['part', '(-) tube squeezer inside<1> (Default', true],
  ['mates', 'Mates', true],
];

/* ---------- graphics area ---------- */

const Viewport = styled.main`
  position: relative;
  flex: 1;
  min-width: 0;
  margin-bottom: 15px;
  border: 1px solid ${c.line};
  border-width: 0 0 1px 1px;
  background: ${c.canvas};
`;
const ViewColumn = styled.div`
  display: flex;
  flex: 1;
  min-width: 0;
  background: ${c.base};
`;
const Model = styled.svg`
  position: absolute;
  left: 382px;
  top: 230px;
`;
const Triad = styled.svg`
  position: absolute;
  left: 5px;
  bottom: 19px;
`;
const PaneHandle = styled.button`
  position: absolute;
  left: -1px;
  top: 387px;
  display: flex;
  align-items: center;
  justify-content: center;
  width: 8px;
  height: 38px;
  background: ${c.base};
`;
const Watermark = styled.div`
  position: absolute;
  right: 43px;
  bottom: 12px;
  color: #a6a8ad;
  font-size: 14px;
  line-height: 22px;
`;
const WatermarkTitle = styled.div`
  font-size: 19px;
  line-height: 24px;
`;
const DocButtons = styled.div`
  position: absolute;
  right: 7px;
  top: 1px;
  display: flex;
`;
const TaskPane = styled.div`
  position: absolute;
  right: 0;
  top: 50px;
  width: 25px;
  border: 1px solid ${c.line};
  border-width: 1px 0 1px 1px;
`;
const TaskTab = styled.button`
  display: flex;
  align-items: center;
  justify-content: center;
  width: 24px;
  height: 24px;
  background: ${(p) => (p.$on ? '#b3b3b3' : '#333')};
  & + & { border-top: 1px solid ${c.line}; }
`;

/* ---------- status bar and taskbar ---------- */

const StatusBar = styled.footer`
  display: flex;
  align-items: center;
  height: 19px;
  padding: 1px 6px 0 1px;
  border-top: 1px solid ${c.line};
`;
const StatusRight = styled.div`
  display: flex;
  align-items: center;
  margin-left: auto;
`;
const StatusCell = styled.span`
  flex: none;
  width: ${(p) => p.$w}px;
  line-height: 16px;
  padding: 0 4px 0 3px;
  text-align: ${(p) => p.$align || 'left'};
  ${(p) => p.$rule && css`border-right: 1px solid #e2e2e2;`}
  height: 16px;
`;
const UpCaret = styled.span`
  border: 3px solid transparent;
  border-top: 0;
  border-bottom-color: #f2f2f2;
  margin: 0 66px 0 23px;
`;

const Taskbar = styled.footer`
  display: flex;
  height: 40px;
  background: linear-gradient(90deg, #213740 0, #243a43 39%, #2d2d2d 41%, #2e2e2e 43%, #3f4043 47%, #3f4044 76%, #484848 82%);
`;
const AppButton = styled.button`
  display: flex;
  align-items: center;
  justify-content: center;
  width: ${(p) => p.$w || 49}px;
  height: 40px;
  ${(p) => p.$run && css`background: linear-gradient(#76b9ed, #76b9ed) bottom / 40px 2px no-repeat;`}
  ${(p) => p.$on && css`background: #4e636b; box-shadow: inset 0 -2px #76b9ed;`}
`;
const WinSearch = styled.label`
  display: flex;
  align-items: center;
  width: 288px;
  height: 40px;
  padding-left: 12px;
  gap: 12px;
  background: #f2f2f2;
  border: 1px solid #bdbdbd;
  border-left: 0;
  overflow: hidden;
`;
const WinInput = styled.input`
  flex: 1;
  min-width: 0;
  height: 30px;
  padding: 0;
  border: 0;
  background: none;
  font-size: 14px;
  &::placeholder { color: #2b2b2b; opacity: 1; }
`;
const Tray = styled.div`
  display: flex;
  align-items: center;
  margin-left: auto;
  height: 40px;
`;
const Weather = styled.button`
  display: flex;
  align-items: center;
  gap: 8px;
  color: #ff6b68;
  font-size: 13px;
  margin-right: 20px;
`;
const TrayButton = styled.button`
  display: flex;
  align-items: center;
  justify-content: center;
  width: 24px;
  height: 40px;
`;
const Clock = styled.time`
  width: 66px;
  text-align: center;
  line-height: 18px;
  color: #fff;
`;
const Alerts = styled(TrayButton)`
  width: 36px;
  margin-left: 4px;
`;
const Copilot = styled(TrayButton)`
  width: 46px;
  padding-right: 6px;
`;
const ShowDesktop = styled.button`
  width: 5px;
  height: 40px;
  border-left: 1px solid #8c8c8c;
`;

/* ---------- drawings ---------- */

function SqueezerModel() {
  return (
    <Model width="510" height="370" viewBox="0 0 1530 1110" role="img" aria-label="tube squeezer assembly">
      <defs>
        <linearGradient id="ridgeA" gradientUnits="userSpaceOnUse" x1="240" y1="708" x2="266" y2="754">
          <stop offset="0" stopColor="#8c0022" /><stop offset=".5" stopColor="#ae1a41" /><stop offset="1" stopColor="#900026" />
        </linearGradient>
        <linearGradient id="ridgeB" gradientUnits="userSpaceOnUse" x1="316" y1="862" x2="345" y2="914">
          <stop offset="0" stopColor="#9b002a" /><stop offset=".45" stopColor="#bd204a" /><stop offset="1" stopColor="#940026" />
        </linearGradient>
        <linearGradient id="capLeft" gradientUnits="userSpaceOnUse" x1="70" y1="780" x2="240" y2="690">
          <stop offset="0" stopColor="#5e0018" /><stop offset=".4" stopColor="#9c002b" /><stop offset=".7" stopColor="#8a0023" /><stop offset="1" stopColor="#9c002a" />
        </linearGradient>
        <linearGradient id="capRight" gradientUnits="userSpaceOnUse" x1="1170" y1="260" x2="1330" y2="170">
          <stop offset="0" stopColor="#8d0024" /><stop offset=".4" stopColor="#a50430" /><stop offset=".6" stopColor="#87001f" /><stop offset=".85" stopColor="#ac0a36" /><stop offset="1" stopColor="#7a001e" />
        </linearGradient>
        <linearGradient id="slotFloor" gradientUnits="userSpaceOnUse" x1="700" y1="555" x2="722" y2="593">
          <stop offset="0" stopColor="#a80030" /><stop offset="1" stopColor="#98002a" />
        </linearGradient>
        <linearGradient id="slotEnd" x1="0" y1="0" x2="1" y2="1">
          <stop offset="0" stopColor="#9c0a30" /><stop offset=".6" stopColor="#5c0018" /><stop offset="1" stopColor="#8a0022" />
        </linearGradient>
        <linearGradient id="knob" gradientUnits="userSpaceOnUse" x1="1370" y1="130" x2="1425" y2="250">
          <stop offset="0" stopColor="#2aa804" /><stop offset=".5" stopColor="#2bc200" /><stop offset=".8" stopColor="#40d018" /><stop offset="1" stopColor="#238f06" />
        </linearGradient>
        <linearGradient id="flange" gradientUnits="userSpaceOnUse" x1="1200" y1="40" x2="1300" y2="170">
          <stop offset="0" stopColor="#28a004" /><stop offset=".6" stopColor="#45cf1e" /><stop offset="1" stopColor="#2db800" />
        </linearGradient>
      </defs>
      <g stroke="#0b0b0b" strokeWidth="3.400" strokeLinejoin="round" fill="none">
        <path d="M1190 50l32-15q24 20 44 55l41 70-20 27-50-82-45-42z" fill="url(#flange)" />
        <path d="M1350 290l35-8 3 12q28 46 54 125l-30 18-10-10-50-120z" fill="#2fbd06" />
        <path d="M1352 306l36-17" />
        <path d="M1280 185l27-25q15 6 35-2l28-24q22-14 40-6 32-14 52 10l20 40q8 26-17 52l-78 44q-6 10-2 22l-33 12z" fill="url(#knob)" />
        <path d="M1296 194l52 10 18 35-14 54z" fill="#25a802" />
        <path d="M1296 194l112-66 28 33-88 43M1366 239l82-45-12-33M1448 194l34-14M1436 161l24-20M1448 194l14 36M1307 160q20 10 45-4M1350 150l30-18 20 8" />
        <path d="M95 680L1160 70q30-14 58 2l72 118 60 100 53 120q4 32-20 48L312 1068q-40 22-72-23-110-140-170-295-20-48 25-70z" fill="#8c0023" />
        <path d="M95 680L175 645l65 65 85 155 53 138-66 65q-40 22-72-23-110-140-170-295-20-48 25-70z" fill="url(#capLeft)" stroke="none" />
        <path d="M1085 127l75-57q30-14 58 2l72 118 60 100 53 120q4 32-20 48l-93 27-35-93-88-165z" fill="url(#capRight)" stroke="none" />
        <path d="M1290 485l-38-91q30-16 24-66l49-3 55 130 3 3z" fill="#8c0023" stroke="none" />
        <path d="M175 645L1085 127l55 65L235 712z" fill="#8b0021" />
        <path d="M345 912L1252 394l38 91L375 1003z" fill="#900024" />
        <path d="M235 712L1140 192l60 12-45 50L300 726l-50 20z" fill="url(#ridgeA)" stroke="none" />
        <path d="M325 865L365 846 1190 378l40-14 22 30L345 912z" fill="url(#ridgeB)" stroke="none" />
        <path d="M295 720L1118 252q62-30 96 22 32 66-24 104L362 848q-62 24-92-24-34-66 25-104z" fill="#87001f" />
        <path d="M290 718L1118 246q62-28 102 22 32 72-28 114L362 856q-68 20-100-28-34-70 28-110z" strokeDasharray="3 3" strokeWidth="2.400" />
        <path d="M1118 252q62-30 96 22 32 66-24 104l-25-28q34-30 8-58l-43 4z" fill="url(#slotEnd)" strokeWidth="2" />
        <path d="M290 790L1165 290q40 30 0 60L340 825q-50 8-50-35z" fill="url(#slotFloor)" />
        <path d="M292 790l10-20L1132 296l34-4L300 790z" fill="#37c60a" />
        <path d="M300 768L1132 293" strokeDasharray="4 4" strokeWidth="6" />
        <path d="M294 793L1168 294" strokeWidth="5" />
        <path d="M340 825L1165 350" strokeWidth="5" />
        <path d="M340 825L1165 350" stroke="#24a000" strokeDasharray="3 6" strokeWidth="3" />
        <path d="M362 843L1188 374" strokeDasharray="4 4" strokeWidth="5" />
        <path d="M295 720l12 45M340 825l22 23M1118 252l12 43M1165 350l25 28" />

        <path d="M175 645L1085 127M375 1003L1290 485M235 712L1140 192M345 912L1252 394" />
        <path d="M1160 70q40 42 75 98l42 80q30 62 48 77l58 133M1085 127q80-6 145 41M1085 127q85 18 120 78l70 120M1085 127l55 65 28 46M1140 192q38-22 62 12M1165 225l40-18 76-24M1230 168l38-8 20 24" />
        <path d="M1228 360l47-32 70-38M1228 360l24 34 38 91M1275 325q40 75 15 160M1325 325q10 75-35 160M1252 394q36-16 25-60M1345 295l-20 30 60-24" />
        <path d="M175 645l60 67 28 33M175 645q-10 55 30 130l70 125M175 645q-38 45-28 105l83 165q50 75 82 150M95 680q30 28 52 70M203 775q-16-50 32-63M112 795q10-30 35-45M140 840l35-40 90-52M190 930l45-15 90-50M275 900q22 26 70 12M318 860l27 52 33 91M275 900q40 55 103 103M265 965q50 36 113 38M210 975q28 12 55-10M70 750q60 170 170 295M112 795q6 40 28 45 20 70 50 90l20 45 30 70" />
        <path d="M125 845l22 32 5 12-24-30zM165 910l25 42v8l-24-36z" fill="#21a000" strokeWidth="3" />
      </g>
    </Model>
  );
}

function AxisTriad() {
  return (
    <Triad width="60" height="46" viewBox="0 0 60 46" role="img" aria-label="orientation triad">
      <path d="M35 8L16 19" stroke="#1818c8" strokeWidth="3.500" />
      <path d="M34 8L16 18" stroke="#8484f0" strokeWidth="1" />
      <path d="M9 23l5-7 5 7z" fill="#1414b8" />
      <path d="M36 8l10 20" stroke="#c81c1c" strokeWidth="3.500" />
      <path d="M36 9l10 18" stroke="#f09090" strokeWidth="1" />
      <path d="M50 35l-8-8 6-4z" fill="#c01414" />
      <circle cx="36" cy="7" r="4.500" fill="#124d12" />
      <path d="M33 1l3 4 3-4M36 5v5" stroke="#0b9a0b" fill="none" />
      <path d="M3 21h4l-4 8h4" stroke="#0000f0" fill="none" />
      <path d="M49 34l4 8M53 34l-4 8" stroke="#f01010" fill="none" />
    </Triad>
  );
}

function DetectiveArt() {
  return (
    <svg width="78" height="38" viewBox="0 0 78 38" aria-hidden="true">
      <g fill="none" stroke="#85859a" strokeWidth="3">
        <path d="M5 24Q-1 14 8 9q6-6 12 0 5 6-1 11" />
        <circle cx="30" cy="28" r="7" />
        <path d="M6 25l8 6 8 1" strokeWidth="4" />
      </g>
      <g fill="none" stroke="#dcdce6"><path d="M5 24Q-1 14 8 9q6-6 12 0 5 6-1 11" /><circle cx="30" cy="28" r="7" /></g>
      <path d="M49 38q2-9 10-11l8-5q11 4 13 16z" fill="#5d8a58" />
      <path d="M50 38l3-8 13-9-6 17z" fill="#f4f4f4" />
      <path d="M51 33l4 2 1 3h-6z" fill="#4a78b8" />
      <path d="M38 12q0-8 11-9 14 0 15 9l-2 10-8 9q-5 4-9 0-6-6-7-19z" fill="#dca477" />
      <path d="M56 10l3 7-2 12 6-6q3-8 2-14z" fill="#b67c50" />
      <path d="M37 12q-1-9 7-11 22-4 22 8 0 8-4 11l-3-6q-1-6-8-8-10 0-14 6z" fill="#76502c" />
      <path d="M41 13h4M49 13h5M43 24h6" stroke="#4b2c18" strokeWidth="1.300" />
      <path d="M46 14l-2 6 3 1" fill="none" stroke="#9a6038" />
      <path d="M42 15.500h2M50 15.500h3" stroke="#222" strokeWidth="1.500" />
    </svg>
  );
}

const EdgeLogo = () => (
  <svg width="24" height="24" viewBox="0 0 24 24" aria-hidden="true">
    <circle cx="12" cy="12" r="12" fill="#1670c8" />
    <path d="M0 12C0 4 6 0 12 0c7 0 12 5 12 10 0 4-3 6-6 6-3 0-4-1-3-3 1-3-2-6-6-6-4 0-8 2-9 5z" fill="#35b9d8" />
    <path d="M13 0c7 1 11 5 11 10 0 4-3 6-6 6-3 0-4-1-3-3 3-6 2-10-2-13z" fill="#58d36a" />
    <path d="M9 11c-3 5 1 11 8 10 2 0 4-2 5-3-2 1-7 1-10-2-1-1-2-3-1-5z" fill="#213740" />
    <path d="M9 10c-5 4-3 12 4 14C5 25 0 19 0 12c1-4 6-6 9-2z" fill="#0f4f9e" />
  </svg>
);
const ChromeLogo = () => (
  <svg width="24" height="24" viewBox="0 0 24 24" aria-hidden="true">
    <circle cx="12" cy="12" r="12" fill="#fbc116" />
    <path d="M12 12L1.600 6A12 12 0 0 1 22.400 6z" fill="#e33b2e" />
    <path d="M1.600 6A12 12 0 0 0 12 24l5.200-9z" fill="#2da24c" />
    <path d="M12 6h10.400L17 15z" fill="#fbc116" />
    <circle cx="12" cy="12" r="6" fill="#fff" />
    <circle cx="12" cy="12" r="4.700" fill="#2f74e6" />
  </svg>
);
const FolderLogo = () => (
  <svg width="22" height="20" viewBox="0 0 22 20" aria-hidden="true">
    <path d="M0 1h8l2 3h12v14H0z" fill="#fdd060" />
    <path d="M0 1h8l2 3H0z" fill="#dda016" />
    <path d="M4 11h14v8h-4v-4H8v4H4z" fill="#3a94dc" />
  </svg>
);
const SwLabel = styled.text`
  font-family: "Liberation Sans", sans-serif;
  font-weight: 700;
`;
const SolidLogo = () => (
  <svg width="24" height="24" viewBox="0 0 24 24" aria-hidden="true">
    <path d="M1 5L13 0l10 4v14l-11 4L1 19z" fill="#b5161c" />
    <path d="M1 5L13 0l10 4-11 4z" fill="#e5373a" />
    <path d="M12 8l11-4v14l-11 4z" fill="#8d0e13" />
    <SwLabel x="3" y="16" fontSize="11" fill="#fff">S</SwLabel>
    <SwLabel x="12" y="15" fontSize="11" fill="#fff">W</SwLabel>
    <SwLabel x="7" y="23" fontSize="8" fill="#fff" stroke="#222" strokeWidth="2" paintOrder="stroke">2017</SwLabel>
  </svg>
);

const line = { fill: 'none', stroke: '#fff', strokeWidth: 1.4 };

export default function App() {
  return (
    <Page>
      <Global />
      <TitleBar>
        <Logo>
          <svg width="29" height="28" viewBox="0 0 29 28" aria-hidden="true">
            <path d="M10 2q9-3 9 2 0 4-9 6 8 1 4 8-4 6-13 9 8-9 9-15M2 27q8-3 11-8M26 11q-7-2-8 2-1 3 4 6 2 5-7 6" fill="none" stroke="#d9261c" strokeWidth="2" strokeLinejoin="round" />
          </svg>
          <LogoText><b>SOLID</b>WORKS</LogoText>
        </Logo>
        <MenuBar>
          {['File', 'Edit', 'View', 'Insert', 'Tools', 'Window', 'Help'].map((m) => <MenuItem key={m}>{m}</MenuItem>)}
          <PinButton aria-label="Pin menu"><Icon name="pin" size={16} /></PinButton>
        </MenuBar>
        <QuickBar>
          {['newDoc', 'open', 'save', 'print', 'undo', 'cursor'].map((n) => (
            <ToolPair key={n} $on={n === 'cursor'}>
              <ToolButton aria-label={n}><Icon name={n} /></ToolButton>
              <ToolButton $w={13} aria-label={n + ' options'}><Caret /></ToolButton>
            </ToolPair>
          ))}
          <ToolButton aria-label="Rebuild"><Icon name="traffic" size={20} /></ToolButton>
          <ToolButton aria-label="File properties"><Icon name="list" size={18} /></ToolButton>
          <ToolButton aria-label="Options"><Icon name="gear" size={15} /></ToolButton>
          <ToolButton $w={13} aria-label="More options"><Caret /></ToolButton>
        </QuickBar>
        <DocTitle>tube squeezer assm *</DocTitle>
        <CommandSearch>
          <Icon name="prompt" size={15} />
          <CommandInput placeholder="Search Commands" aria-label="Search Commands" />
          <Icon name="magnifier" size={20} />
          <Caret $color="#777" />
        </CommandSearch>
        <WindowButtons>
          <ToolButton $w={30} aria-label="Help"><Icon name="help" size={16} /></ToolButton>
          <ToolButton $w={13} aria-label="Help options"><Caret /></ToolButton>
          <ToolButton aria-label="Minimize"><Icon name="winMin" size={18} /></ToolButton>
          <ToolButton aria-label="Restore"><Icon name="winRestore" size={17} /></ToolButton>
          <ToolButton aria-label="Close"><Icon name="winClose" size={17} /></ToolButton>
        </WindowButtons>
      </TitleBar>

      <Ribbon>
        {ribbon.map((r, i) => {
          if (!r) return <RibbonRule key={i} />;
          const [icon, label, w, o] = r;
          return (
            <RibbonItem key={i} $w={w} $drop={o.drop} $off={o.off} $on={o.on}>
              <Icon name={icon} size={20} />
              <RibbonText>{label}</RibbonText>
              {o.drop && <RibbonCaret />}
            </RibbonItem>
          );
        })}
      </Ribbon>

      <Workspace>
        <MainArea>
          <CommandTabs>
            {commandTabs.map(([t, w], i) => <CommandTab key={t} $w={w} $on={i === 0}>{t}</CommandTab>)}
          </CommandTabs>
          <Lower>
            <SideArea>
              <Strip $w={49} $end={7} $rule>
                <Grip $m="2px 2px 8px 3px" />
                <StripItems items={stripA} />
              </Strip>
              <Strip $w={47} $end={7}>
                <Grip $m="2px 2px 9px 3px" />
                <StripItems items={stripB} />
              </Strip>
              <Panel>
                <PanelGrip><Dot /></PanelGrip>
                <PanelTabs>
                  {['assembly', 'propList', 'config', 'target', 'ballDark'].map((n, i) => (
                    <PanelTab key={n} $on={i === 0} aria-label={n}><Icon name={n} size={18} /></PanelTab>
                  ))}
                  <PanelMore aria-label="More tabs">
                    <svg width="9" height="13" viewBox="0 0 9 13"><path d="M1 1l3 5.500L1 12M4 1l4 5.500L4 12" fill="none" stroke="#a5a5a5" strokeWidth="1.300" /></svg>
                  </PanelMore>
                </PanelTabs>
                <Filter>
                  <Icon name="funnel" size={17} />
                  <FilterCaret />
                  <FilterInput aria-label="Filter tree" />
                </Filter>
                <ul>
                  <TreeRow $root>
                    <TreeLabel><Icon name="assembly" size={19} />{'tube squeezer assm  (Default<Display Sta'}</TreeLabel>
                  </TreeRow>
                  {tree.map(([icon, label, open]) => (
                    <TreeRow key={label}>
                      <Twisty $show={open} />
                      <TreeLabel><Icon name={icon} size={19} />{label}</TreeLabel>
                    </TreeRow>
                  ))}
                </ul>
                <Rollback />
                <HScroll>
                  <ScrollButton $w={15} aria-label="Scroll left"><svg width="6" height="9" viewBox="0 0 6 9"><path d="M5 1L1 4.500 5 8" fill="none" stroke="#444" strokeWidth="1.600" /></svg></ScrollButton>
                  <ScrollTrack />
                  <ScrollButton $w={12} aria-label="Scroll right"><svg width="6" height="9" viewBox="0 0 6 9"><path d="M1 1l4 3.500L1 8" fill="none" stroke="#444" strokeWidth="1.600" /></svg></ScrollButton>
                </HScroll>
                <SheetTabs>
                  <SheetPad />
                  {['M2 1v8M9 1L3 5l6 4z', 'M7 1L2 5l5 4z', 'M3 1l5 4-5 4z', 'M8 1v8M1 1l6 4-6 4z'].map((d) => (
                    <SheetNav key={d} aria-label="Sheet navigation"><svg width="10" height="10" viewBox="0 0 10 10"><path d={d} fill="#85878a" stroke="#85878a" /></svg></SheetNav>
                  ))}
                  <SheetTab $w={58} $on>Model</SheetTab>
                  <SheetTab $w={74}>3D Views</SheetTab>
                </SheetTabs>
              </Panel>
            </SideArea>
            <ViewColumn>
              <Viewport>
                <SqueezerModel />
                <AxisTriad />
                <PaneHandle aria-label="Collapse panel"><Dot /></PaneHandle>
                <Watermark>
                  <WatermarkTitle>Activate Windows</WatermarkTitle>
                  Go to Settings to activate Windows.
                </Watermark>
              </Viewport>
            </ViewColumn>
          </Lower>
          <DocButtons>
            {['docPrev', 'docNext', 'docMin', 'docRestore', 'docClose'].map((n) => (
              <ToolButton key={n} aria-label={n}><Icon name={n} size={17} /></ToolButton>
            ))}
          </DocButtons>
          <TaskPane>
            {['home', 'books', 'openFolder', 'palette', 'ball', 'propList', 'chat'].map((n) => (
              <TaskTab key={n} $on={n === 'ball'} aria-label={n}><Icon name={n} size={17} /></TaskTab>
            ))}
          </TaskPane>
        </MainArea>
        <SideArea>
          <Strip $w={34} $end={8}>
            <Grip $m="2px 0 9px 6px" />
            {stripR.map((n) => (
              <StripRow key={n} $pad={5}><StripButton aria-label={n}><Icon name={n} size={19} /></StripButton></StripRow>
            ))}
          </Strip>
        </SideArea>
      </Workspace>

      <StatusBar>
        <span>SOLIDWORKS Premium 2017 x64 Edition</span>
        <StatusRight>
          <StatusCell $w={86} $rule>Under Defined</StatusCell>
          <StatusCell $w={8} $rule />
          <StatusCell $w={101} $rule>Editing Assembly</StatusCell>
          <StatusCell $w={16} $rule />
          <StatusCell $w={62} $align="right">IPS</StatusCell>
          <UpCaret />
          <Icon name="tools" size={14} />
        </StatusRight>
      </StatusBar>

      <Taskbar>
        <AppButton $w={48} aria-label="Start">
          <svg width="16" height="16" viewBox="0 0 16 16"><path d="M0 2l7-1v6.500H0zM8 1l8-1v7.500H8zM0 8.500h7V15l-7-1zM8 8.500h8V16l-8-1z" fill="#fff" /></svg>
        </AppButton>
        <WinSearch>
          <svg width="16" height="17" viewBox="0 0 16 17"><circle cx="10" cy="6" r="5" fill="none" stroke="#222" strokeWidth="1.400" /><path d="M6 10l-6 6" stroke="#222" strokeWidth="1.400" /></svg>
          <WinInput placeholder="Type here to search" aria-label="Type here to search" />
          <DetectiveArt />
        </WinSearch>
        <AppButton $w={46} aria-label="Task view">
          <svg width="16" height="16" viewBox="0 0 16 16"><path d="M1 0v3h10V0M1 16v-3h10v3M1 5h10v6H1zM14.500 0v3M14.500 8v8" {...line} /><path d="M13 4h3v3h-3z" fill="#fff" /></svg>
        </AppButton>
        <AppButton $w={54} aria-label="Edge"><EdgeLogo /></AppButton>
        <AppButton $w={48} aria-label="Chrome" $run><ChromeLogo /></AppButton>
        <AppButton aria-label="File Explorer"><FolderLogo /></AppButton>
        <AppButton aria-label="SOLIDWORKS 2017" $on><SolidLogo /></AppButton>
        <Tray>
          <Weather>
            <svg width="24" height="22" viewBox="0 0 24 22" aria-hidden="true">
              <path d="M12 0q2 0 3 2l9 17q0 3-3 3H3q-3 0-3-3L9 2q1-2 3-2z" fill="#dc0a0a" />
              <g stroke="#fff" strokeWidth="1.200"><path d="M11 5v6M8 6.500l6 3M14 6.500l-6 3M16 11v6M13 12.500l6 3M19 12.500l-6 3M9 14v6M6 15.500l6 3M12 15.500l-6 3" /></g>
            </svg>
            Weather alert
          </Weather>
          <TrayButton aria-label="Hidden icons"><svg width="12" height="8" viewBox="0 0 12 8"><path d="M0 7l6-6 6 6" {...line} /></svg></TrayButton>
          <TrayButton aria-label="Meet now"><svg width="14" height="16" viewBox="0 0 14 16"><path d="M1 4h8v8H1zM9 7l3-2v6l-3-2M3 1.500q4-2 7 0M3 14.500q4 2 7 0" {...line} /></svg></TrayButton>
          <TrayButton aria-label="Network"><svg width="14" height="14" viewBox="0 0 14 14"><path d="M1 13Q2 3 13 1M4 13q1-7 9-8M7 13q1-4 6-5" fill="none" stroke="#aaa" strokeWidth="1.200" /><circle cx="11.500" cy="12" r="1.800" fill="#fff" /></svg></TrayButton>
          <TrayButton aria-label="Volume"><svg width="17" height="14" viewBox="0 0 17 14"><path d="M1 5h3l3-3v10L4 9H1zM9 5q2 2 0 4M11.500 3q3 4 0 8M14 1q4 6 0 12" {...line} strokeWidth="1.200" /></svg></TrayButton>
          <Clock>3:21 PM<br />3/24/2024</Clock>
          <Alerts aria-label="5 notifications">
            <svg width="24" height="24" viewBox="0 0 24 24">
              <path d="M0 0h16v12H7l-3 3v-3H0z" fill="#fff" /><path d="M3 3h10M3 6h10M3 9h6" stroke="#555" />
              <circle cx="15" cy="15" r="8" fill="#3b3b3b" stroke="#9b9b9b" />
              <text x="12" y="19" fontSize="11" fill="#fff">5</text>
            </svg>
          </Alerts>
          <Copilot aria-label="Copilot preview">
            <svg width="20" height="20" viewBox="0 0 20 20">
              <path d="M4 1q2-1 8 0l-4 12q-1 2-5 2-4-1-3-5z" fill="#1a9fe0" />
              <path d="M8 1h4q2 1 3 4h-4L8 13z" fill="#2b63d8" />
              <path d="M12 5h5q4 1 3 5l-2 6H8z" fill="#c95fd0" />
              <path d="M0 10l4-3-1 8q-3-1-3-5z" fill="#4cc46a" />
              <path d="M5 13h15v6H5z" fill="#ffc400" />
              <text x="6" y="18" fontSize="6" fontWeight="700" fill="#111">PRE</text>
            </svg>
          </Copilot>
          <ShowDesktop aria-label="Show desktop" />
        </Tray>
      </Taskbar>
    </Page>
  );
}
